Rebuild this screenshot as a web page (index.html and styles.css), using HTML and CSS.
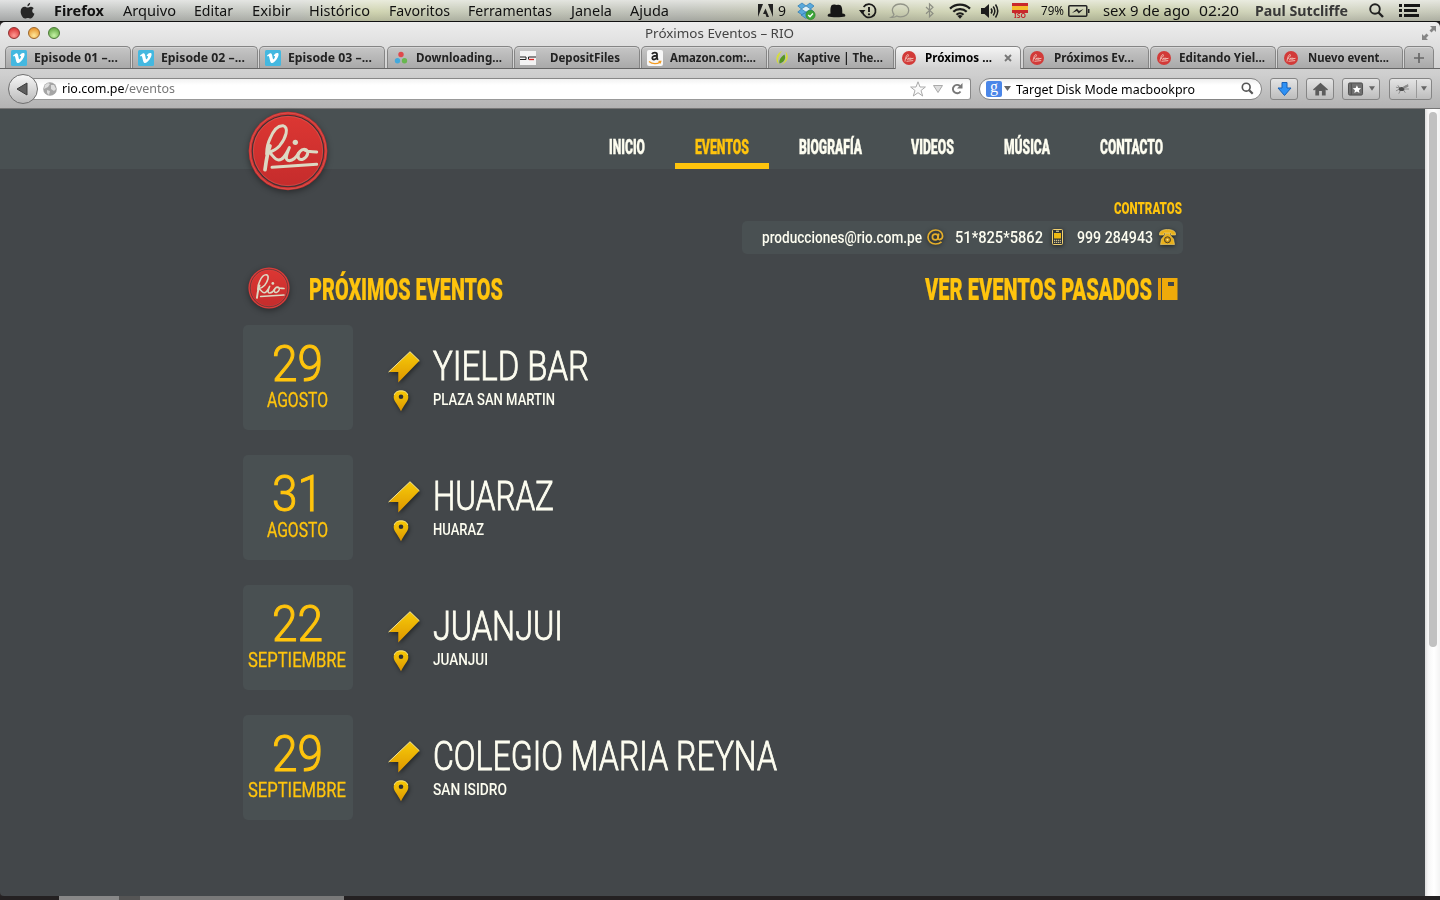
FILE: index.html
```html
<!DOCTYPE html>
<html lang="es">
<head>
<meta charset="utf-8">
<title>Próximos Eventos – RIO</title>
<link rel="stylesheet" href="styles.css">
</head>
<body>
<svg class="defs" width="0" height="0" aria-hidden="true">
  <defs>
    <linearGradient id="red" x1="0" y1="0" x2="0" y2="1"><stop offset="0" stop-color="#dc3733"/><stop offset="1" stop-color="#c52c2c"/></linearGradient>
    <linearGradient id="gold" x1="0" y1="0" x2="0" y2="1"><stop offset="0" stop-color="#f7cb08"/><stop offset="1" stop-color="#dd9600"/></linearGradient>
  </defs>
  <symbol id="rio" viewBox="46 11 252 252">
    <circle cx="172" cy="137" r="118" fill="#d23130"/>
    <circle cx="172" cy="137" r="114" fill="none" stroke="#d9605a" stroke-width="2"/>
    <circle cx="172" cy="137" r="107" fill="url(#red)" stroke="#453235" stroke-width="4"/>
    <circle cx="172" cy="137" r="104" fill="none" stroke="#dc655e" stroke-width="1.5"/>
    <g fill="none" stroke="#dcd9c3" stroke-width="9" stroke-linecap="round" stroke-linejoin="round">
      <path stroke-width="11" d="M103 193C106 170 110 140 118 122"/>
      <path d="M108 145C108 128 112 112 119 98C128 76 142 60 157 61C176 66 166 98 147 121C137 132 122 139 112 141C124 142 129 163 144 164C160 164 168 142 176 127C166 151 162 165 176 166C190 165 198 154 204 143"/>
      <path d="M226 133C212 128 199 145 203 158C210 169 228 158 231 145C232 137 228 132 222 134C232 141 246 138 258 140"/>
      <path d="M124 186L258 177"/>
    </g>
    <circle cx="194" cy="111" r="8" fill="#dcd9c3"/>
  </symbol>
  <symbol id="riofav" viewBox="0 0 16 16">
    <circle cx="8" cy="8" r="7" fill="#d23a38"/>
    <path d="M4 11.5C4.400 8 5.500 4.500 7 4.500C8.300 5 6.500 7.500 5 8C6 8 6 9.500 7 9.500L8 7.800L8.200 9.500L9.500 8C11 7.500 10 10 9.300 9L12.500 8.300M5.500 11.300L12.200 10.600" fill="none" stroke="#f0c5bb" stroke-width=".9"/>
  </symbol>
  <symbol id="vimeo" viewBox="0 0 16 16">
    <rect width="16" height="16" rx="1.500" fill="#44b8e0"/>
    <path d="M2 5.600L4.700 3.400C6.300 2.600 7 4 7.300 6C7.700 8.500 8 9.300 8.400 9.300C9 9.300 10.100 7.300 10 6.500C9.900 5.800 9.200 5.900 8.600 6.100C9.500 3.300 11.500 2.500 13 3.100C14.300 4.200 13.300 7 11.700 9.300C9.500 12.400 7.300 13.800 6 12.700C4.900 11.600 4.600 7.500 3.900 6.200C3.600 5.700 3.200 6.100 2.600 6.500Z" fill="#fff"/>
  </symbol>
  <symbol id="ticket" viewBox="0 0 32 33">
    <path d="M.6 21L22 .7L31.400 9.800L10.300 31.500V21Z" fill="url(#gold)"/>
    <path d="M.6 21L22 .7L31.400 9.800" fill="none" stroke="#fff0a8" stroke-width=".9"/>
  </symbol>
  <symbol id="pin" viewBox="0 0 16 22">
    <path fill-rule="evenodd" d="M8 .5C12 .5 15.300 3.200 15.300 7.200C15.300 11 11 15 8 21.300C5 15 .7 11 .7 7.200C.7 3.200 4 .5 8 .5ZM8 4.500A2.300 2.300 0 1 0 8 9.100A2.300 2.300 0 1 0 8 4.500Z" fill="url(#gold)"/>
    <path d="M1.200 5C2.500 1.500 5 .9 8 .9S13.500 1.500 14.800 5" fill="none" stroke="#fff0a0" stroke-width=".8"/>
  </symbol>
</svg>

<div class="screen">
  <div class="menubar">
    <svg class="apple" viewBox="0 0 16 18"><path d="M10.800 .3C11 2 9.600 4 7.900 4C7.600 2.300 9.300 .5 10.800 .3ZM14.700 6.100C12.300 7.600 12.600 10.900 15.400 12C14.600 14.300 13 17 11.300 17C10.200 17 9.700 16.400 8.400 16.400C7 16.400 6.500 17 5.400 17C3.300 17 .7 13 .7 9.500C.7 6.300 2.700 4.500 4.900 4.500C6.300 4.500 7.300 5.300 8.200 5.300C9.100 5.300 10.200 4.300 11.900 4.400C13 4.500 14 5 14.700 6.100Z" fill="#272727"/></svg>
    <nav class="menus">
      <b data-w="50">Firefox</b><span data-w="53">Arquivo</span><span data-w="39">Editar</span><span data-w="39">Exibir</span><span data-w="61">Histórico</span><span data-w="61">Favoritos</span><span data-w="84">Ferramentas</span><span data-w="41">Janela</span><span data-w="39">Ajuda</span>
    </nav>
    <div class="status">
      <svg class="adobe" viewBox="0 0 15 14"><path d="M0 0H5L0 13ZM10 0H15V13ZM7.500 4.500L11 13H8.500L7.500 10H5Z" fill="#222"/></svg>
      <span class="count" data-w="8">9</span>
      <svg class="dropbox" viewBox="0 0 19 18"><g fill="#58a9dc" stroke="#2d78b2" stroke-width=".7"><path d="M5 1L9 4L4.500 7L.8 4Z"/><path d="M13 1L9 4L13.500 7L17 4Z"/><path d="M4.500 7L9 10L5.300 13L.8 10Z"/><path d="M13.500 7L9 10L12.500 13L17 10Z"/><path d="M4 13L9 10.500L13 13L9 16.500Z"/></g><path d="M9 4.600L12.800 7L9 9.400L5.200 7Z" fill="#dcf0fa"/><circle cx="13.500" cy="13" r="4.700" fill="#3da338" stroke="#277e25" stroke-width=".5"/><path d="M11.200 13L13 14.800L15.900 11.500" fill="none" stroke="#fff" stroke-width="1.400"/></svg>
      <svg class="hat" viewBox="0 0 19 14"><path d="M3.500 9.500C3.200 4 3.500 .6 7 .6C8.500 .6 9 1.200 10 1C14.500 0 15.500 3 15.300 9.500C18 9.700 19 11 18 12.500C15 13.600 4 13.600 1 12.500C0 11 1 9.700 3.500 9.500Z" fill="#161616"/></svg>
      <svg class="clock" viewBox="0 0 18 16"><path d="M3.500 9A6.600 6.600 0 1 0 4.600 4" fill="none" stroke="#191919" stroke-width="1.700"/><path d="M0 7H6.500L3 11Z" fill="#191919"/><path d="M10 4V9" stroke="#191919" stroke-width="1.900"/><circle cx="10" cy="11.300" r="1.100" fill="#191919"/></svg>
      <svg class="bubble" viewBox="0 0 20 16"><path d="M4 11.500C0 6 4 1 10.500 1C16 1 18.700 4 18.700 7.500C18.700 11 15.500 13.800 10.500 13.800C9 13.800 7.800 13.500 6.800 13C5 14.300 3 14.500 1.300 14.300C3 13.500 3.800 12.600 4 11.500Z" fill="none" stroke="#929488" stroke-width="1.300"/></svg>
      <svg class="bt" viewBox="0 0 9 15"><path d="M1 4L8 10.500L4.500 13.800V1L8 4.300L1 10.800" fill="none" stroke="#8d8f84" stroke-width="1.200"/></svg>
      <svg class="wifi" viewBox="0 0 22 16"><g fill="none" stroke="#1c1c1c" stroke-width="2.200"><path d="M1 5.600C6.500 .2 15.500 .2 21 5.600"/><path d="M4.300 8.800C8 5.200 14 5.200 17.700 8.800"/><path d="M7.500 11.800C9.500 9.900 12.500 9.900 14.500 11.800"/></g><path d="M8.500 13Q11 11 13.500 13L11 15.800Z" fill="#1c1c1c"/></svg>
      <svg class="sound" viewBox="0 0 18 16"><path d="M0 5H3.500L8 1V15L3.500 11H0Z" fill="#1c1c1c"/><g fill="none" stroke="#1c1c1c" stroke-width="1.500"><path d="M10 5.500Q12 8 10 10.500M12.200 3.500Q15.500 8 12.200 12.500M14.500 1.500Q19 8 14.500 14.500"/></g></svg>
      <div class="flag"><i></i><span data-w="12">ISO</span></div>
      <span class="pct" data-w="23">79%</span>
      <svg class="battery" viewBox="0 0 22 12"><rect x=".8" y=".8" width="18" height="10.400" rx="1" fill="none" stroke="#222" stroke-width="1.500"/><path d="M20 4H21.500V8H20ZM4 8L9 3.500L11 6L15.500 4L10.800 8.500L8.800 6Z" fill="#222"/></svg>
      <span class="date" data-w="87">sex 9 de ago</span><span class="time" data-w="40">02:20</span>
      <b class="user" data-w="93">Paul Sutcliffe</b>
      <svg class="glass" viewBox="0 0 15 15"><circle cx="6" cy="6" r="4.800" fill="none" stroke="#222" stroke-width="1.900"/><path d="M9.500 9.500L14 14" stroke="#222" stroke-width="2.400"/></svg>
      <svg class="list" viewBox="0 0 21 13"><path d="M0 0H3V3H0ZM0 5H3V8H0ZM0 10H3V13H0ZM5 0H21V3H5ZM5 5H18V8H5ZM5 10H20V13H5Z" fill="#161616"/></svg>
    </div>
  </div>

  <div class="chrome">
    <div class="titlebar">
      <div class="lights"><i class="r"></i><i class="y"></i><i class="g"></i></div>
      <span data-w="149">Próximos Eventos – RIO</span>
      <svg class="expand" viewBox="0 0 14 14"><path d="M8 0H14V6L12 4L9.500 6.500L7.500 4.500L10 2ZM0 8L2 10L4.500 7.500L6.500 9.500L4 12L6 14H0Z" fill="#858585"/></svg>
    </div>
    <div class="tabs">
      <div class="tab"><svg><use href="#vimeo"/></svg><b data-w="84">Episode 01 –...</b></div>
      <div class="tab"><svg><use href="#vimeo"/></svg><b data-w="84">Episode 02 –...</b></div>
      <div class="tab"><svg><use href="#vimeo"/></svg><b data-w="84">Episode 03 –...</b></div>
      <div class="tab"><svg viewBox="0 0 16 16"><circle cx="8" cy="4.500" r="2.700" fill="#e0484b"/><circle cx="4.500" cy="10.800" r="2.700" fill="#43a9dc"/><circle cx="11.500" cy="10.800" r="2.700" fill="#68b74f"/></svg><b data-w="86">Downloading...</b></div>
      <div class="tab deposit"><svg viewBox="0 0 16 16"><rect y="1" width="16" height="14" fill="#f3f3f3"/><path d="M0 7H6V9.500H0M8.500 9.500V7H16" fill="none" stroke="#222" stroke-width="1"/><path d="M9 9.500H14" stroke="#d22" stroke-width="1.300"/></svg><b data-w="70">DepositFiles</b></div>
      <div class="tab"><svg viewBox="0 0 16 16"><rect width="16" height="16" rx="2" fill="#f7f7f7"/><path d="M5 4.200C6 2 10 2 10 4.500V8.500L11 9.800M10 5.800C7 5.600 5 6.400 5.300 8.300C5.800 10.300 9.500 9.800 10 7" fill="none" stroke="#222" stroke-width="1.800"/><path d="M2 11.500C5.500 14.500 10.500 14.200 13 12M11.500 11.300H13.800L13 13.500" fill="none" stroke="#f39b20" stroke-width="1.200"/></svg><b data-w="86">Amazon.com:...</b></div>
      <div class="tab"><svg viewBox="0 0 16 16"><path d="M5 14.500C1 11 1 4 8.500 .8C6.500 2.500 6 4 5.500 5.500C3.500 8 3.800 11.500 5 14.500ZM11.500 1.500C15.500 5.500 14.500 12 7 15C11.500 12 13 7 11.500 1.500Z" fill="#d5dd3c"/><path d="M10.500 4.500C12.500 9 9.500 12.500 5.500 13.500C4.500 9.500 7.500 6.500 10.500 4.500Z" fill="#559722"/></svg><b data-w="86">Kaptive | The...</b></div>
      <div class="tab active"><svg><use href="#riofav"/></svg><b data-w="67">Próximos ...</b><svg class="x" viewBox="0 0 8 8"><path d="M1 1L7 7M7 1L1 7" stroke="#777" stroke-width="1.900"/></svg></div>
      <div class="tab mid"><svg><use href="#riofav"/></svg><b data-w="80">Próximos Ev...</b></div>
      <div class="tab"><svg><use href="#riofav"/></svg><b data-w="86">Editando Yiel...</b></div>
      <div class="tab mid"><svg><use href="#riofav"/></svg><b data-w="81">Nuevo event...</b></div>
      <div class="tab plus"><svg viewBox="0 0 12 12"><path d="M6 1V11M1 6H11" stroke="#686868" stroke-width="1.700"/></svg></div>
    </div>
    <div class="toolbar">
      <div class="back"><svg viewBox="0 0 12 14"><path d="M1 7L11 1V13Z" fill="#5e5e5e" stroke="#3d3d3d" stroke-width="1"/></svg></div>
      <div class="url">
        <svg class="globe" viewBox="0 0 14 14"><circle cx="7" cy="7" r="6.800" fill="#a5a5a5"/><path d="M2 3L5 1L7 2L5 5L3 6L1 7ZM8 3L11 3L13 7L11 9L8 7ZM4 8L7 9L6 13L4 11Z" fill="#ddd"/></svg>
        <span class="addr" data-w="113">rio.com.pe<em>/eventos</em></span>
        <svg class="star" viewBox="0 0 16 16"><path d="M8 .8L10 6H15.400L11 9.500L12.700 15L8 11.700L3.300 15L5 9.500L.6 6H6Z" fill="#fafafa" stroke="#aaa"/></svg>
        <svg class="drop" viewBox="0 0 10 8"><path d="M.5 .5H9.500L5 7.500Z" fill="#ddd" stroke="#aaa"/></svg>
        <svg class="reload" viewBox="0 0 12 12"><path d="M9.500 8.500A4.200 4.200 0 1 1 9 3" fill="none" stroke="#777" stroke-width="1.900"/><path d="M11.500 0V5.500H6Z" fill="#777"/></svg>
      </div>
      <div class="search"><span class="g"><span>g</span></span><svg class="mini" viewBox="0 0 7 5"><path d="M0 0H7L3.500 5Z" fill="#666"/></svg><span class="query" data-w="179">Target Disk Mode macbookpro</span><svg class="glass" viewBox="0 0 15 15"><circle cx="6" cy="6" r="4.500" fill="none" stroke="#555" stroke-width="1.900"/><path d="M9.500 9.500L13.500 13.500" stroke="#555" stroke-width="2.500"/></svg></div>
      <div class="btn"><svg viewBox="0 0 14 14"><path d="M4.500 .5H9.500V6H13.500L7 13.500L.5 6H4.500Z" fill="#2e91f5" stroke="#1761b8"/></svg></div>
      <div class="btn"><svg viewBox="0 0 16 14"><path d="M8 .3L16 7.500L15 8.500L13.500 7.500V13.800H9.500V9H6.500V13.800H2.500V7.500L1 8.500L0 7.500Z" fill="#5c5c5c"/></svg></div>
      <div class="btn wide"><svg class="book" viewBox="0 0 16 14"><rect x=".5" y=".5" width="15" height="13" rx="1.500" fill="#707070" stroke="#4b4b4b"/><path d="M3.500 1V13" stroke="#4b4b4b"/><path d="M9.500 3L10.800 5.900L14 6.200L11.600 8.200L12.300 11.300L9.500 9.700L6.700 11.300L7.400 8.200L5 6.200L8.200 5.900Z" fill="#fff"/></svg><svg class="mini" viewBox="0 0 7 5"><path d="M0 0H7L3.500 5Z" fill="#666"/></svg></div>
      <div class="btn split"><svg class="bug" viewBox="0 0 16 12"><path d="M1 4L5 5L3 2M5 6L1 8M6 7L4 11M9 7L11 10M8 5L14 1M9 6L15 6" fill="none" stroke="#777" stroke-width=".8"/><ellipse cx="7" cy="6" rx="3" ry="2.200" fill="#4e4e4e"/><ellipse cx="11.500" cy="3.500" rx="3.200" ry="1.300" fill="#8b8b8b" transform="rotate(-20 11.500 3.500)"/></svg><i></i><svg class="mini" viewBox="0 0 7 5"><path d="M0 0H7L3.500 5Z" fill="#666"/></svg></div>
    </div>
  </div>

  <div class="viewport">
    <main class="page">
      <header class="top">
        <svg class="logo"><use href="#rio"/></svg>
        <nav class="nav">
          <a><span data-w="36">INICIO</span></a><a class="on"><span data-w="54">EVENTOS</span></a><a><span data-w="63">BIOGRAFÍA</span></a><a><span data-w="43">VIDEOS</span></a><a><span data-w="46">MÚSICA</span></a><a><span data-w="63">CONTACTO</span></a>
        </nav>
      </header>
      <section class="contact">
        <h3><span data-w="68">CONTRATOS</span></h3>
        <div class="pill">
          <span data-w="160">producciones@rio.com.pe</span>
          <svg class="at" viewBox="0 0 17 16"><g fill="none" stroke="#e4ae2b" stroke-width="1.700"><circle cx="8.300" cy="8" r="2.900"/><path d="M11.700 4.500L10.900 9C10.800 11.500 15.600 11 15.600 7C15.600 3.500 12.500 1 8.700 1C4.500 1 1 4 1 8.200C1 12.300 4.300 15 8.500 15C11 15 13 14.200 14.500 12.800"/></g></svg>
          <span data-w="88">51*825*5862</span>
          <svg class="mobile" viewBox="0 0 11 16"><rect x=".5" y=".5" width="10" height="15" rx="1" fill="#2f3335" stroke="#f0d070"/><path d="M2 4H9V9.500H2Z" fill="#efb912"/><path d="M4 2.200H7" stroke="#fff0b0"/><path d="M2 11.300H9M2 13.300H9" stroke="#ffe9a6" stroke-dasharray="1.200 .7"/></svg>
          <span data-w="76">999 284943</span>
          <svg class="phone" viewBox="0 0 17 16"><path d="M.5 5C.5 2 4 .5 8.500 .5S16.500 2 16.500 5V6H12V4H5V6H.5ZM6 4.500H11V6L14.500 10L15.500 15.500H1.500L2.500 10L6 6Z" fill="#e8b01c" stroke="#f8d974" stroke-width=".6"/><circle cx="8.500" cy="10.800" r="3" fill="#cf9712" stroke="#493d26"/><circle cx="8.500" cy="10.800" r="1" fill="#ffe391"/></svg>
        </div>
      </section>
      <div class="heading">
        <svg class="logo small"><use href="#rio"/></svg>
        <h2><span data-w="194">PRÓXIMOS EVENTOS</span></h2>
        <h2 class="past"><span data-w="227">VER EVENTOS PASADOS</span></h2>
        <svg class="notebook" viewBox="0 0 20 22"><path d="M0 0H3V22H0Z" fill="#e69f08"/><path fill-rule="evenodd" d="M4 0H19.500V22H4ZM10 4V8H16V4Z" fill="#efaa0a"/></svg>
      </div>
      <section class="events">
        <article><div class="day"><strong data-w="51">29</strong><span class="month" data-w="61">AGOSTO</span></div><div class="icons"><svg class="ticket"><use href="#ticket"/></svg><svg class="pin"><use href="#pin"/></svg></div><div class="info"><h1><span data-w="156">YIELD BAR</span></h1><p><span data-w="122">PLAZA SAN MARTIN</span></p></div></article>
        <article><div class="day"><strong data-w="51">31</strong><span class="month" data-w="61">AGOSTO</span></div><div class="icons"><svg class="ticket"><use href="#ticket"/></svg><svg class="pin"><use href="#pin"/></svg></div><div class="info"><h1><span data-w="121">HUARAZ</span></h1><p><span data-w="51">HUARAZ</span></p></div></article>
        <article><div class="day"><strong data-w="51">22</strong><span class="month" data-w="98">SEPTIEMBRE</span></div><div class="icons"><svg class="ticket"><use href="#ticket"/></svg><svg class="pin"><use href="#pin"/></svg></div><div class="info"><h1><span data-w="130">JUANJUI</span></h1><p><span data-w="55">JUANJUI</span></p></div></article>
        <article><div class="day"><strong data-w="51">29</strong><span class="month" data-w="98">SEPTIEMBRE</span></div><div class="icons"><svg class="ticket"><use href="#ticket"/></svg><svg class="pin"><use href="#pin"/></svg></div><div class="info"><h1><span data-w="344">COLEGIO MARIA REYNA</span></h1><p><span data-w="74">SAN ISIDRO</span></p></div></article>
      </section>
    </main>
    <div class="scroll"><i></i></div>
  </div>
  <div class="desktop"><i></i></div>
</div>
<script src="fit.js"></script>
</body>
</html>
```
FILE: styles.css
```css
* { box-sizing: border-box; }
body { margin: 0; font-family: "Noto Sans", "Open Sans", sans-serif; color: #111; }
h1, h2, h3, p { margin: 0; font-weight: 400; }
svg { display: block; flex: none; overflow: visible; }
.defs { position: absolute; }
[data-w] { display: inline-block; white-space: nowrap; flex: none; }
.fit { display: inline-block; transform-origin: 0 50%; }
.screen { width: 1440px; height: 900px; overflow: hidden; display: flex; flex-direction: column; background: #2a2627; }

/* system menu bar */
.menubar { height: 22px; display: flex; align-items: center; padding-left: 20px; border-bottom: 1px solid #111; font-size: 14.3px; line-height: 21px;
  background: linear-gradient(rgba(255,255,255,.55), rgba(255,255,255,0) 55%, rgba(0,0,0,.14)), linear-gradient(90deg, #bfc1c1 0, #c5c8c0 300px, #d1d5b2 375px, #c8ccba 450px, #bfc1bb 680px, #c5c8ae 830px, #d2d6b8 960px, #c8cda9 1150px, #d5d8c4 1300px, #c8cabb 1440px); }
.apple { width: 15px; height: 18px; }
.menus { display: flex; gap: 18.5px; margin-left: 19px; }
.status { display: flex; align-items: center; margin-left: 89px; }
.adobe { width: 15px; height: 14px; }
.count { margin-left: 5px; }
.dropbox { width: 19px; height: 18px; margin-left: 11px; }
.hat { width: 19px; height: 14px; margin-left: 11px; }
.clock { width: 18px; height: 16px; margin-left: 13px; }
.bubble { width: 20px; height: 16px; margin-left: 13px; }
.bt { width: 9px; height: 15px; margin-left: 15px; }
.wifi { width: 22px; height: 16px; margin-left: 15px; }
.sound { width: 18px; height: 16px; margin-left: 10px; }
.flag { width: 16px; height: 16px; margin-left: 13px; font-size: 7px; line-height: 6px; color: #c3262b; text-align: center; font-weight: 700; display: flex; flex-direction: column; align-items: center; }
.flag i { width: 16px; height: 10px; background: linear-gradient(#c9282b 28%, #f4bd2d 28% 70%, #c9282b 70%); }
.pct { font-size: 12px; margin-left: 13px; }
.battery { width: 22px; height: 12px; margin-left: 4px; }
.date { margin-left: 13px; }
.time { margin-left: 9px; }
.user { margin-left: 16px; color: #383838; }
.menubar .glass { width: 15px; height: 15px; margin-left: 21px; }
.list { width: 21px; height: 13px; margin-left: 15px; }

/* browser chrome */
.chrome { height: 87px; background: linear-gradient(#ededed, #d2d2d2 45px, #cfcfcf 52px, #b3b3b3 86px); border-bottom: 1px solid #777; border-radius: 5px 5px 0 0; }
.titlebar { height: 24px; display: flex; align-items: center; font-size: 13.300px; line-height: 22px; color: #444; padding: 0 4px 2px 8px; }
.lights { display: flex; gap: 8px; width: 637px; }
.lights i { width: 12px; height: 12px; border-radius: 50%; border: 1px solid #666; }
.lights .r { background: radial-gradient(circle at 50% 75%, #ff9b94, #dd3c3d 75%); border-color: #8e3030; }
.lights .y { background: radial-gradient(circle at 50% 75%, #ffe89a, #e99a35 75%); border-color: #9b6528; }
.lights .g { background: radial-gradient(circle at 50% 75%, #c6f3a5, #6cae4c 75%); border-color: #4a7836; }
.expand { width: 14px; height: 14px; margin-left: auto; }
.tabs { height: 23px; display: flex; gap: 1.200px; padding-left: 5px; border-bottom: 1px solid #666; }
.tab { width: 126px; height: 22px; flex: none; display: flex; align-items: center; padding-left: 5px; border: 1px solid #858585; border-bottom: 0; border-radius: 5px 5px 0 0; background: linear-gradient(#c6c6c6, #a9a9a9); font-size: 11.600px; line-height: 20px; color: #222; box-shadow: inset 0 1px rgba(255,255,255,.3); }
.tab svg { width: 16px; height: 16px; margin-right: 7px; }
.tab.deposit b { margin-left: 7px; }
.tab.mid b { margin-left: 2px; }
.tab.active { height: 23px; background: linear-gradient(#f4f4f4, #d0d0d0); color: #000; }
.tab.active b { margin-left: 1px; }
.tab svg.x { width: 8px; height: 8px; margin: 0 0 0 12px; }
.tab.plus { width: 30px; padding-left: 8px; }
.tab.plus svg { width: 12px; height: 12px; margin: 0; }
.toolbar { height: 39px; display: flex; align-items: center; padding-left: 8px; }
.back { width: 30px; height: 30px; border-radius: 50%; border: 1px solid #707070; background: linear-gradient(#f6f6f6, #bbb); display: flex; align-items: center; padding-left: 7px; z-index: 1; }
.back svg { width: 12px; height: 14px; }
.url { width: 941px; height: 22px; margin-left: -8px; border: 1px solid #888; border-bottom-color: #999; border-radius: 0 3px 3px 0; background: linear-gradient(#f2f2f2, #fff 6px); display: flex; align-items: center; padding: 0 7px 0 12px; font-size: 12.500px; line-height: 20px; color: #000; }
.addr, .query { margin-top: 1px; }
.url em { font-style: normal; color: #777; }
.globe { width: 14px; height: 14px; margin-right: 5px; }
.star { width: 16px; height: 16px; margin-left: auto; }
.drop { width: 10px; height: 8px; margin: 0 8px 0 7px; }
.reload { width: 12px; height: 12px; }
.search { width: 283px; height: 22px; margin-left: 8px; border: 1px solid #858585; border-radius: 11px; background: linear-gradient(#eee, #fff 6px); display: flex; align-items: center; padding: 0 7px 0 6px; font-size: 12.700px; line-height: 20px; color: #000; }
.g { width: 16px; height: 16px; border-radius: 2px; background: #4a86e8; color: #fff; font: 16px/12px "Liberation Serif", serif; text-align: center; }
.mini { width: 7px; height: 5px; margin: 0 5px 0 2px; }
.search .glass { width: 13px; height: 13px; margin-left: auto; }
.btn { width: 28px; height: 22px; margin-left: 8px; border: 1px solid #858585; border-radius: 3px; background: linear-gradient(#e4e4e4, #bdbdbd); display: flex; align-items: center; justify-content: center; }
.btn svg { width: 15px; height: 14px; }
.btn.wide { width: 38px; margin-left: 8px; }
.btn svg.mini { width: 6px; height: 5px; margin: 0 0 0 6px; }
.btn.split { width: 43px; margin-left: 9px; }
.btn.split i { width: 1px; height: 18px; background: #999; margin-left: 6px; }
.btn.split svg.mini { margin-left: 4px; }

/* site */
.viewport { height: 787px; display: flex; }
.page { width: 1425px; background: #43474a; font-family: Roboto, sans-serif; color: #fdfdf0; border-radius: 0 0 0 4px; }
.top { height: 60px; background: #495052; display: flex; padding-left: 245.500px; }
.logo { width: 84px; height: 84px; filter: drop-shadow(0 2px 3px rgba(0,0,0,.4)); position: relative; z-index: 2; }
.nav { display: flex; gap: 10px; margin-left: 259.500px; font-size: 20.500px; font-weight: 900; -webkit-text-stroke: .4px; }
.nav a { height: 60px; padding: 24px 19.800px 0 20px; line-height: 28px; border-bottom: 6px solid transparent; }
.nav .on { color: #ffc40d; border-color: #ffc40d; }
.contact { width: 441px; margin: 30px 0 0 742px; }
.contact h3 { font-size: 17px; font-weight: 900; line-height: 18px; height: 22px; color: #ffc40d; text-align: right; padding-right: 1px; }
.pill { height: 33px; border-radius: 5px; background: #495052; display: flex; align-items: center; padding-left: 20px; font-size: 16px; font-weight: 500; line-height: 31px; }
.pill svg { height: 16px; margin-top: -1px; filter: drop-shadow(0 1px 2px rgba(0,0,0,.6)); }
.pill .at { width: 17px; margin: -1px 11px 0 5px; }
.pill .mobile { width: 11px; margin: -1px 14px 0 9px; }
.pill .phone { width: 17px; margin-left: 6px; }
.heading { height: 71px; display: flex; align-items: center; padding-left: 247px; color: #ffc40d; }
.logo.small { width: 44px; height: 44px; margin-top: -3px; }
.heading h2 { font-size: 31px; font-weight: 900; line-height: 40px; margin-left: 18px; -webkit-text-stroke: .2px; }
.heading h2.past { margin-left: 422px; }
.notebook { width: 20px; height: 22px; margin: -1px 0 0 6px; }
.events { padding-left: 243px; display: flex; flex-direction: column; gap: 25px; }
.events article { height: 105px; display: flex; }
.day { width: 110px; height: 105px; background: #495052; border-radius: 5px; color: #ffc40d; padding: 15px 2px 0 0; display: flex; flex-direction: column; align-items: center; }
.day strong { font-size: 50px; font-weight: 300; line-height: 49px; height: 49px; -webkit-text-stroke: 1px; }
.day .month { font-size: 20px; line-height: 22px; -webkit-text-stroke: .3px; }
.icons { width: 32px; margin-left: 35px; padding-top: 26px; }
.icons svg { filter: drop-shadow(1px 2px 2px rgba(0,0,0,.45)); }
.ticket { width: 32px; height: 33px; }
.pin { width: 16px; height: 22px; margin: 6px 0 0 5px; }
.info { margin-left: 13px; padding-top: 21px; }
.info h1 { font-size: 40.500px; font-weight: 300; line-height: 40px; height: 40px; -webkit-text-stroke: .9px; }
.info p { font-size: 16.500px; line-height: 28px; font-weight: 500; }
.scroll { width: 15px; background: linear-gradient(90deg, #ddd, #f6f6f6 3px, #fff 9px, #f3f3f3); padding: 3px 3px 0 4px; }
.scroll i { display: block; width: 8px; height: 535px; border-radius: 4px; background: #c1c1c1; }
.desktop { height: 4px; padding-left: 59px; background: #242122; }
.desktop i { display: block; width: 285px; height: 4px; background: linear-gradient(90deg, #888 60px, #555 60px 81px, #797979 81px); }
```
FILE: fit.js
```js
// Condense each label horizontally to its column width.
document.querySelectorAll('[data-w]').forEach(function (el) {
  var inner = document.createElement('span');
  inner.className = 'fit';
  while (el.firstChild) inner.appendChild(el.firstChild);
  el.appendChild(inner);
  var target = parseFloat(el.dataset.w);
  var natural = inner.getBoundingClientRect().width;
  el.style.width = target + 'px';
  inner.style.transform = 'scaleX(' + target / natural + ')';
});
```
